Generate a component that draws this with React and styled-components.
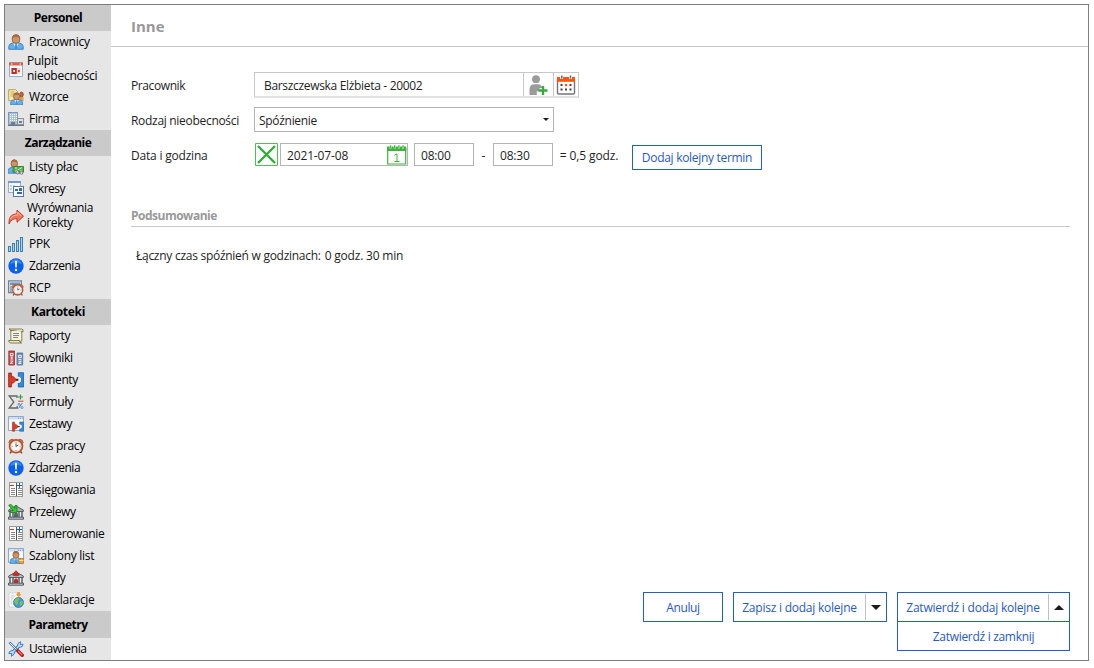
import React from "react";
import styled, { createGlobalStyle } from "styled-components";

const GlobalStyle = createGlobalStyle`
  * { box-sizing: border-box; }
  html, body { margin: 0; background: #fff; }
  body {
    font-family: "Open Sans", "Noto Sans", sans-serif;
    font-size: 12px;
    line-height: 15px;
    color: #1e1e1e;
  }
`;

const Window = styled.div`
  position: relative;
  display: flex;
  align-items: flex-start;
  width: 1085px;
  height: 657px;
  margin: 4px 0 0 4px;
  padding: 1px;
  padding-right: 0;

  &::after {
    content: "";
    position: absolute;
    inset: 0;
    border: 1px solid #7f7f7f;
    pointer-events: none;
  }
`;
const Sidebar = styled.nav`
  flex: none;
  width: 106px;
  height: 658px;
  background: #e6e6e6;
  color: #000;
`;
const GroupTitle = styled.div`
  height: ${(p) => p.$h || 26}px;
  display: flex;
  align-items: center;
  justify-content: center;
  padding-bottom: ${(p) => (p.$h ? 0 : 2)}px;
  background: #cacaca;
  font-weight: 700;
`;
const Item = styled.a`
  display: flex;
  align-items: center;
  height: ${(p) => (p.$double ? 33 : 22)}px;
  padding-left: 3px;
  gap: ${(p) => (p.$double ? 3 : 5)}px;
`;
const ItemText = styled.span`
  white-space: pre;
  letter-spacing: ${(p) => p.$ls}px;
  padding-bottom: ${(p) => (p.$double ? 4 : 1)}px;
`;
const Svg = styled.svg`
  display: block;
  flex: none;
`;
const Label = styled.span`
  white-space: pre;
  letter-spacing: ${(p) => p.$ls || 0}px;
`;
const Main = styled.main`
  flex: 1;
  height: 655px;
  display: flex;
  flex-direction: column;
`;
const Header = styled.header`
  height: 42px;
  padding: 11px 20px 0;
  border-bottom: 1px solid #c8c8c8;
  color: #999;
  font-size: 15px;
  line-height: 20px;
  font-weight: 700;
`;
const Form = styled.section`
  padding: 25px 0 0 20px;
  display: grid;
  grid-template-columns: 123px auto;
  grid-template-rows: 26px 26px 28px;
  row-gap: 9px;
`;
const FieldLabel = styled.label`
  padding-top: ${(p) => p.$top || 6}px;
`;
const Picker = styled.div`
  display: flex;
  width: 325px;
  height: 26px;
  border: 1px solid #c8c8c8;
  border-bottom: 2px solid #e2e2e2;
`;
const PickerText = styled.div`
  width: 268px;
  padding: 5px 0 0 9px;
`;
const PickerButton = styled.div`
  width: ${(p) => p.$w}px;
  border-left: 1px solid #c8c8c8;
  padding: 2px 0 0 ${(p) => p.$pad}px;
`;
const Select = styled.div`
  width: 300px;
  height: 25px;
  border: 1px solid #b4b4b4;
  padding: 0 4px;
  display: flex;
  align-items: center;
  justify-content: space-between;
`;
const SelectText = styled.div`
  padding-top: 2px;
`;
const DateRow = styled.div`
  display: flex;
  align-items: flex-start;
  padding-top: 1px;
`;
const Input = styled.div`
  width: ${(p) => p.$w}px;
  height: 23px;
  margin-left: ${(p) => p.$ml || 0}px;
  border: 1px solid #b4b4b4;
  padding: 0 0 0 6px;
  display: flex;
  align-items: center;
  justify-content: space-between;
`;
const InputText = styled.div`
  padding-top: 2px;
`;
const Plain = styled.span`
  width: ${(p) => p.$w}px;
  padding-top: 5px;
  text-align: center;
  white-space: pre;
`;
const Button = styled.button`
  display: flex;
  align-items: center;
  justify-content: center;
  width: ${(p) => p.$w}px;
  height: ${(p) => p.$h}px;
  margin: ${(p) => p.$m || 0};
  padding: 0;
  border: 1px solid #235fc8;
  background: #fff;
  color: #2759c9;
  font: inherit;
`;
const SplitText = styled.span`
  flex: 1;
  text-align: center;
`;
const SplitArrow = styled.span`
  width: 21px;
  height: 26px;
  border-left: 1px solid #c0c0c0;
  display: flex;
  align-items: center;
  justify-content: center;
  padding-right: 1px;
`;
const Summary = styled.section`
  margin: 37px 19px 0 20px;
`;
const SummaryTitle = styled.h2`
  margin: 0;
  height: 20px;
  padding-top: 1px;
  border-bottom: 1px solid #c8c8c8;
  font-size: 12px;
  line-height: 15px;
  color: #999;
`;
const SummaryText = styled.p`
  margin: 21px 0 0 5px;
  display: flex;
  gap: 4px;
`;
const Actions = styled.footer`
  margin-top: auto;
  padding: 0 19px 9px 0;
  display: flex;
  justify-content: flex-end;
  align-items: flex-start;
  gap: 10px;
`;
const Stack = styled.div`
  display: flex;
  flex-direction: column;
`;

const Ic = ({ children, ...rest }) => (
  <Svg width="16" height="16" viewBox="0 0 16 16" {...rest}>{children}</Svg>
);

const Person = () => (
  <g>
    <path d="M.8 15.300V12.400Q1 9.800 4 9.200L6 8.700h4l2 .5q3 .7 3.200 3.200v2.900z" fill="#62b1ee" stroke="#3a7cbb" strokeWidth=".9" />
    <path d="M5.300 9.200 8 14.500l2.700-5.300z" fill="#d9efff" />
    <path d="M7.300 10h1.500l.7 4.800h-3z" fill="#4f92d0" />
    <ellipse cx="8" cy="5" rx="3.800" ry="4.300" fill="#cf9567" stroke="#8a5a35" strokeWidth=".9" />
    <path d="M4.600 3.800C5 1.500 6.300.8 8 .8s3.100.8 3.400 3C9.500 2.800 6.500 2.800 4.600 3.800z" fill="#a56c40" />
  </g>
);
const Clock = () => (
  <g>
    <path d="M3.500 13.500 2 15.300M12.500 13.500l1.500 1.800" stroke="#7a5130" strokeWidth="1.600" />
    <path d="M.8 4.500Q1 1.300 4.800 1.200L6 2.500 2 6zM15.200 4.500Q15 1.300 11.200 1.200L10 2.500 14 6z" fill="#d98a52" stroke="#8a4322" strokeWidth=".7" />
    <circle cx="8" cy="8.300" r="6.300" fill="#fff" stroke="#b5512c" strokeWidth="2" />
    <circle cx="8" cy="8.300" r="5.300" fill="#f4f6f8" stroke="#eba98a" strokeWidth=".7" />
    <path d="M8 8.500V5.500M8 8.500l2.300-1.500" stroke="#444" strokeWidth=".9" />
    <path d="M8 4v.8M8 12v.8M3.700 8.300h.8M11.500 8.300h.8" stroke="#555" strokeWidth=".8" />
  </g>
);
const Browser = () => (
  <g>
    <path d="M.5.500h15v14H.5z" fill="#fafcff" stroke="#8fa9c6" />
    <path d="M1 1h14v2.500H1z" fill="#cfdff0" />
    <path d="M10 2.200h1M12 2.200h1M14 2.200h.7" stroke="#6f90b8" />
  </g>
);
const Plug = () => (
  <g>
    <path d="M.6 1h2.900v4.300L5 4.300l3.500 3.500L5 11.400l-1.500-1.200V15H.6z" fill="#dc3b2a" stroke="#a3211a" strokeWidth=".8" />
    <path d="M7.800 7.800h2.500" stroke="#55252a" strokeWidth="2" />
    <path d="M15.500.7h-5.200v4h1.500q1.700 1 1.700 3.100t-1.700 3.200h-1.500v4h5.200z" fill="#2f8be0" stroke="#1860ae" strokeWidth=".8" />
    <path d="M9.800 5.300h1.600q1.200.9 1.200 2.500t-1.200 2.500H9.800" fill="none" stroke="#e8f6ff" strokeWidth="1.100" />
  </g>
);
const Ledger = () => (
  <g shapeRendering="crispEdges">
    <path d="M1.500.500h13v14h-13z" fill="#fff" stroke="#9b9b9b" />
    <path d="M8 1v13" stroke="#555" strokeWidth="1" />
    <path d="M3 6.500h4M10 6.500h4M3 8.500h4M10 8.500h4M3 10.500h4M10 10.500h4M3 12.500h4M10 12.500h4" stroke="#888" />
    <path d="M2 3.500h4" stroke="#e02a20" />
    <path d="M9 3.500h5M11.500 1v5" stroke="#0b5fe0" />
  </g>
);
const Bank = ({ accent }) => (
  <g>
    <path d="M8 2 15.300 6v1.500H.7V6z" fill={accent ? "#b9c0bf" : "#aab1b5"} stroke="#454f56" strokeWidth=".9" />
    <path d="M2 8v5M5 8v5M11 8v5M14 8v5" stroke="#59646a" strokeWidth="1.500" />
    <path d="M3.500 8v5M12.500 8v5" stroke="#eceff0" />
    <path d="M6 13V9.800Q8 7.300 10 9.800V13z" fill={accent ? "#c92a25" : "#5b656b"} />
    <path d="M.5 13.200h15v2H.5z" fill="#c3c8ca" stroke="#454f56" strokeWidth=".9" />
  </g>
);

const icons = {
  person: <Ic><Person /></Ic>,
  calendar: (
    <Ic>
      <path d="M1.500.500h13v14h-13z" fill="#f7faff" stroke="#8fb0d2" />
      <path d="M1 .5h14v3H1z" fill="#d2604f" />
      <path d="M3 2h1.500M11.500 2H13" stroke="#fff" />
      <path d="M3.500 6h9v6h-9z" fill="#f3d3ce" />
      <path d="M3.500 6h5.300v6H3.500z" fill="#bd2f27" />
      <path d="M5.300 8h1.700v2H5.300z" fill="#fff" />
      <path d="M10 8h1.800v2H10z" fill="#cc4638" />
    </Ic>
  ),
  templates: (
    <Ic>
      <path d="M.7.700h7l2 2v9h-9z" fill="#f8ecab" stroke="#b99a3e" strokeWidth=".9" />
      <path d="M2.500 3h4M2.500 5h4M2.500 7h3" stroke="#b7a25a" strokeWidth=".9" />
      <ellipse cx="13.500" cy="5.500" rx="1.900" ry="2.500" fill="#b96a3d" stroke="#8a4728" strokeWidth=".7" />
      <path d="M12 8h3.500v4H12z" fill="#e3a13a" />
      <g transform="translate(2 3.200) scale(.83)"><Person /></g>
    </Ic>
  ),
  company: (
    <Ic shapeRendering="crispEdges">
      <path d="M.5 1.500h9v12h-9z" fill="#a9c1e4" stroke="#7d98bd" />
      <path d="M2 3.500h7M2 5.500h7M2 7.500h7M2 9.500h7" stroke="#fff" strokeDasharray="1 1" />
      <path d="M9.500 7.500h6v6h-6z" fill="#dfe1e4" stroke="#8c9198" />
      <path d="M11 10h3v2h-3zM3 11h4v3H3z" fill="#737b86" />
      <path d="M0 14.500h16" stroke="#6e7580" />
    </Ic>
  ),
  payroll: (
    <Ic>
      <g transform="translate(-.5 0) scale(.85 .93)"><Person /></g>
      <path d="M5 7.500h10.500v5.500H5z" fill="#58b04c" stroke="#2e7d2b" strokeWidth=".9" />
      <path d="m7 12.500 7-4M7 9h2M12 12h2" stroke="#d9f4cf" />
      <circle cx="9.500" cy="13.300" r="1.600" fill="#ddd" stroke="#666" strokeWidth=".8" />
      <circle cx="13.500" cy="13.800" r="1.500" fill="#ddd" stroke="#666" strokeWidth=".8" />
    </Ic>
  ),
  periods: (
    <Ic shapeRendering="crispEdges">
      <path d="M.5.500h12v11H.5z" fill="#f5f9ff" stroke="#90add6" />
      <path d="M0 0h13v2H0z" fill="#6f9bd8" />
      <path d="M2 4h2v2H2zM5 4h2v2H5zM2 7h2v2H2z" fill="#b9cdeb" />
      <path d="M5.500 5.500h10v10h-10z" fill="#fff" stroke="#58779f" />
      <path d="M7 8h3v2H7zM9 11h5v2H9zM11 7h3v3h-3z" fill="#3168ba" />
    </Ic>
  ),
  corrections: (
    <Ic>
      <path d="M1 15Q.3 5 9 4.800V1l6.500 6.200L9 13.300V9.600Q3.500 9.300 1 15z" fill="#f0765c" stroke="#c33a2c" strokeWidth="1" strokeLinejoin="round" />
      <path d="M2.500 10Q4 6 9.800 6V3.300L13.300 7" fill="none" stroke="#fbb7a2" />
    </Ic>
  ),
  bars: (
    <Ic shapeRendering="crispEdges">
      <path d="M.5 10.500h2v5h-2zM4.500 7.500h2v8h-2zM8.500 4.500h2v11h-2zM12.500 1.500h2v14h-2z" fill="#abd3ef" stroke="#3d7fae" />
    </Ic>
  ),
  alert: (
    <Ic>
      <circle cx="8" cy="8" r="7.700" fill="#0a5ff0" />
      <path d="M2 6Q3.500 1.300 8 1.300T14 6Q8 3.800 2 6z" fill="#3588ff" />
      <path d="M6.900 2.800h2.200L8.700 9.600H7.300z" fill="#fff" />
      <circle cx="8" cy="12" r="1.250" fill="#fff" />
    </Ic>
  ),
  rcp: (
    <Ic>
      <path d="M.6.800h12.800v11.800H.6z" fill="#d9e5f1" stroke="#6f8298" strokeWidth="1.200" />
      <path d="M2 2.500h10V5H2z" fill="#7592b5" />
      <path d="M2 7h2M2 9h2M2 11h2" stroke="#5d7795" />
      <g transform="translate(3.500 3.500) scale(.78)"><Clock /></g>
    </Ic>
  ),
  report: (
    <Ic>
      <path d="M2.800 2.500h11v10.700h-11z" fill="#f7f5d2" stroke="#898254" />
      <path d="M1 1h12.500q2 .2 1.700 2.600h-2.500M1 1q2.200.4 1.800 2.500" fill="#eeeabc" stroke="#777150" strokeWidth=".9" />
      <path d="M.7 12.500h10.600q.4 2.500 2.300 2.500H2.800Q.7 14.800.7 12.500z" fill="#eeeabc" stroke="#777150" strokeWidth=".9" />
      <path d="M5 5.500h6M5 7.500h6M5 9.500h5" stroke="#6475b5" strokeWidth=".9" />
    </Ic>
  ),
  dictionaries: (
    <Ic>
      <path d="M.8 1h5.700v14H.8z" fill="#c94b4b" stroke="#8e2e30" strokeWidth=".8" />
      <path d="M9 3h5.700v12H9z" fill="#7295bf" stroke="#466b98" strokeWidth=".8" />
      <path d="M2.300 3.500h2.800v2H2.300zM2.300 7h2.800M3.700 7v2M2.300 9h2.800M2.300 11h2.800L2.300 13.300h2.800M10.500 5.500h2.800v2h-2.800zM10.500 9.500h2.800M10.500 11.300h2.800l-2.800 2.200h2.800" fill="none" stroke="#f4f2f2" strokeWidth=".9" />
    </Ic>
  ),
  elements: <Ic><Plug /></Ic>,
  formulas: (
    <Ic>
      <path d="M9 4V2H1.200L5.800 8 1.200 14h8v-2" fill="none" stroke="#676767" strokeWidth="1.300" />
      <path d="M10 3h5M12.500.5v5" stroke="#2e9e3e" strokeWidth="1.200" />
      <path d="M10 7.200h5.500" stroke="#d04b3b" strokeWidth="1" />
      <path d="m14.300 9-3.800 5.500" stroke="#3f7cc8" />
      <circle cx="11" cy="10.300" r="1" fill="none" stroke="#3f7cc8" strokeWidth=".8" />
      <circle cx="14" cy="13.500" r="1" fill="none" stroke="#3f7cc8" strokeWidth=".8" />
    </Ic>
  ),
  sets: <Ic><Browser /><g transform="translate(4 5.500) scale(.75 .65)"><Plug /></g></Ic>,
  clock: <Ic><Clock /></Ic>,
  ledger: <Ic><Ledger /></Ic>,
  transfers: (
    <Ic>
      <Bank />
      <path d="m.7 1.300 2-1 4.300 4V1.500h2V8.500H2.300v-2h2.800z" fill="#38c434" stroke="#127d18" strokeWidth=".8" />
    </Ic>
  ),
  listTemplates: (
    <Ic>
      <Browser />
      <g transform="translate(1.500 2.700) scale(.8 .83)"><Person /></g>
      <path d="M11 10.500h4.500v5H11z" fill="#f0a436" stroke="#bd701e" strokeWidth=".7" />
      <path d="M11 12.500h4.500" stroke="#ffe0a0" />
    </Ic>
  ),
  offices: (
    <Ic>
      <Bank accent />
      <path d="M4.500 5 8 .7 11.500 5 8 6z" fill="#d92b29" stroke="#8e1717" strokeWidth=".6" />
    </Ic>
  ),
  declarations: (
    <Ic>
      <path d="M1 1h10v14H1z" fill="#fff" stroke="#c7ccd1" strokeWidth=".8" />
      <path d="M2.500 4h5M2.500 6h3M2.500 8h2M2.500 10h2M2.500 12h2" stroke="#bfc5ca" />
      <circle cx="10.500" cy="10.500" r="5" fill="#3d98e0" stroke="#2b6aa9" strokeWidth=".7" />
      <path d="M7 7.500q2-2 4-1.500l.5 2-2 1 .6 2-1.400 2.500-1.500-2-1.200-1.500zM12.500 9l2.500.5-.5 3-2.300 1.500-.7-2z" fill="#7fc24b" />
      <path d="M10.500 5 7.500 2.200h1.700V0h2.600v2.200h1.700z" fill="#f29a25" />
    </Ic>
  ),
  tools: (
    <Ic>
      <path d="m3.500 12.500 8-8" stroke="#2c73c4" strokeWidth="3.400" />
      <path d="M10 2.500 12.500.700 12.300 3.500l2.700-.3Q15 6 12.500 6.200L9.500 5.500zM6 10.500 6.200 13 3.500 15.300 3.700 12.500.900 12.600Q.8 10 3.500 9.700z" fill="#bfe0fa" stroke="#2c73c4" strokeWidth=".9" />
      <path d="m4.500 11.500 7-7" stroke="#bfe0fa" strokeWidth="1.600" />
      <path d="M1.300 1.300 9.500 9.500" stroke="#3472b9" strokeWidth="2.200" />
      <path d="M1.500 1.500 9 9" stroke="#e4f3ff" strokeWidth="1" />
      <path d="m9.700 9.700 4.500 4.500" stroke="#b3201c" strokeWidth="3.600" strokeLinecap="round" />
      <path d="m10.200 10 4 4" stroke="#f07a70" strokeWidth="1.100" />
    </Ic>
  ),
};

const groups = [
  { title: "Personel", ls: -0.45, items: [
    ["person", "Pracownicy", -0.25], ["calendar", "Pulpit\nnieobecności", -0.25, true],
    ["templates", "Wzorce", -0.3], ["company", "Firma", -0.3]] },
  { title: "Zarządzanie", ls: -0.5, items: [
    ["payroll", "Listy płac", -0.25], ["periods", "Okresy", -0.5],
    ["corrections", "Wyrównania\ni Korekty", -0.35, true], ["bars", "PPK", -0.3],
    ["alert", "Zdarzenia", -0.45], ["rcp", "RCP", -0.1]] },
  { title: "Kartoteki", ls: -0.3, items: [
    ["report", "Raporty", -0.4], ["dictionaries", "Słowniki", -0.25], ["elements", "Elementy", -0.38],
    ["formulas", "Formuły", -0.28], ["sets", "Zestawy", -0.35], ["clock", "Czas pracy", -0.35],
    ["alert", "Zdarzenia", -0.45], ["ledger", "Księgowania", -0.3], ["transfers", "Przelewy", -0.37],
    ["ledger", "Numerowanie", -0.38], ["listTemplates", "Szablony list", -0.3],
    ["offices", "Urzędy", -0.5], ["declarations", "e-Deklaracje", -0.3]] },
  { title: "Parametry", ls: -0.55, h: 27, items: [["tools", "Ustawienia", -0.4]] },
];

const AddPersonIcon = () => (
  <Svg width="20" height="22" viewBox="0 0 20 22">
    <circle cx="8" cy="4.200" r="3.900" fill="#9b9b9b" />
    <path d="M1.500 20v-5.500Q1.500 9.300 6.500 9.300h3.500q3.500.2 4.300 3.700h-2.800v3.300H8.800V20z" fill="#9b9b9b" />
    <path d="M10.500 15.500h9M15 11v9" stroke="#35ad3a" strokeWidth="2.400" />
  </Svg>
);
const CalendarIcon = () => (
  <Svg width="20" height="20" viewBox="0 0 20 20">
    <path d="M1.500 5v13q0 1 1 1h15q1 0 1-1V5" fill="#fff" stroke="#777" strokeWidth="1.400" />
    <path d="M1 2h18v4.800H1z" fill="#ff5510" />
    <path d="M4 0h3v4H4zM13 0h3v4h-3z" fill="#fff" />
    <path d="M5 .5h1.500v3H5zM13.700.5h1.500v3h-1.500z" fill="#666" />
    <path d="M4.500 9h2v2h-2zM13.500 9h2v2h-2zM4.500 13.500h2v2h-2zM9 13.500h2v2H9zM13.500 13.500h2v2h-2z" fill="#444" />
    <path d="M9 9h2.200v2.200H9z" fill="#ff5510" />
  </Svg>
);
const DateIcon = () => (
  <Svg width="20" height="20" viewBox="0 0 20 20">
    <path d="M.7 3v16h18V3" fill="#fff" stroke="#3db33d" strokeWidth="1.200" />
    <path d="M0 1.500h19.300V6H0z" fill="#3db33d" />
    <path d="M3.500 0v3.500M7.700 0v3.500M11.900 0v3.500M16 0v3.500" stroke="#fff" strokeWidth="2" />
    <path d="M3.500.3v3M7.700.3v3M11.900.3v3M16 .3v3" stroke="#3db33d" strokeWidth="1.300" />
    <path d="M7.300 10.300 10 9v7.500M7.500 16.500h5" fill="none" stroke="#3db33d" strokeWidth="1" />
  </Svg>
);
const ClearIcon = () => (
  <Svg width="24" height="23" viewBox="0 0 24 23">
    <path d="M1.500.5h22v22h-22z" fill="#fff" stroke="#55bb55" />
    <path d="m4 3 17 17M21 3 4 20" stroke="#2fab35" strokeWidth="2.300" />
  </Svg>
);
const Triangle = ({ up, w = 10, h = 5 }) => (
  <Svg width={w} height={h} viewBox="0 0 10 5">
    <path d={up ? "M0 5 5 0l5 5z" : "M0 0h10L5 5z"} fill="#1c1a1a" />
  </Svg>
);

export default function App() {
  return (
    <>
      <GlobalStyle />
      <Window>
        <Sidebar>
          {groups.map((g) => (
            <React.Fragment key={g.title}>
              <GroupTitle $h={g.h}><Label $ls={g.ls}>{g.title}</Label></GroupTitle>
              {g.items.map(([icon, text, ls, dbl]) => (
                <Item key={text} $double={dbl}>
                  {icons[icon]}
                  <ItemText $double={dbl} $ls={ls}>{text}</ItemText>
                </Item>
              ))}
            </React.Fragment>
          ))}
        </Sidebar>
        <Main>
          <Header><Label>Inne</Label></Header>
          <Form>
            <FieldLabel><Label $ls={-0.4}>Pracownik</Label></FieldLabel>
            <Picker>
              <PickerText><Label $ls={-0.32}>Barszczewska Elżbieta - 20002</Label></PickerText>
              <PickerButton $w={30} $pad={4}><AddPersonIcon /></PickerButton>
              <PickerButton $w={25} $pad={2}><CalendarIcon /></PickerButton>
            </Picker>
            <FieldLabel><Label $ls={-0.3}>Rodzaj nieobecności</Label></FieldLabel>
            <Select>
              <SelectText><Label $ls={-0.3}>Spóźnienie</Label></SelectText>
              <Triangle w={6} h={3} />
            </Select>
            <FieldLabel><Label $ls={-0.2}>Data i godzina</Label></FieldLabel>
            <DateRow>
              <ClearIcon />
              <Input $w={128} $ml={2}>
                <InputText><Label $ls={-0.15}>2021-07-08</Label></InputText>
                <DateIcon />
              </Input>
              <Input $w={60} $ml={6}><InputText><Label $ls={-0.2}>08:00</Label></InputText></Input>
              <Plain $w={19}>-</Plain>
              <Input $w={60}><InputText><Label $ls={-0.2}>08:30</Label></InputText></Input>
              <Plain $w={72}><Label $ls={-0.1}>= 0,5 godz.</Label></Plain>
              <Button $w={130} $h={25} $m="2px 0 0 7px"><Label $ls={-0.3}>Dodaj kolejny termin</Label></Button>
            </DateRow>
          </Form>
          <Summary>
            <SummaryTitle><Label $ls={-0.5}>Podsumowanie</Label></SummaryTitle>
            <SummaryText>
              <Label $ls={-0.27}>Łączny czas spóźnień w godzinach:</Label>
              <Label $ls={-0.2}>0 godz. 30 min</Label>
            </SummaryText>
          </Summary>
          <Actions>
            <Button $w={80} $h={30}><Label $ls={-0.4}>Anuluj</Label></Button>
            <Button $w={154} $h={30}>
              <SplitText><Label $ls={-0.23}>Zapisz i dodaj kolejne</Label></SplitText>
              <SplitArrow><Triangle /></SplitArrow>
            </Button>
            <Stack>
              <Button $w={173} $h={30}>
                <SplitText><Label $ls={-0.23}>Zatwierdź i dodaj kolejne</Label></SplitText>
                <SplitArrow><Triangle up /></SplitArrow>
              </Button>
              <Button $w={173} $h={30} $m="-1px 0 0"><Label $ls={-0.3}>Zatwierdź i zamknij</Label></Button>
            </Stack>
          </Actions>
        </Main>
      </Window>
    </>
  );
}
